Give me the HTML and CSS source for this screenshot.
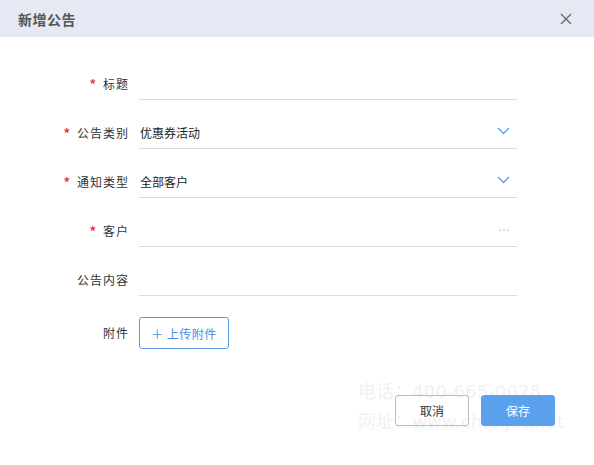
FILE: index.html
```html
<!DOCTYPE html>
<html>
<head>
  <meta charset="utf-8">
  <title>新增公告</title>
  <link rel="stylesheet" href="styles.css">
</head>
<body>
  <div class="dialog">
    <div class="dialog-header">
      <h1>新增公告</h1>
      <span class="close">
        <svg width="12" height="12" viewBox="0 0 12 12"><path d="M1 1 L11 11 M11 1 L1 11" stroke="#666" stroke-width="1.3" fill="none"/></svg>
      </span>
    </div>

    <div class="watermark">
      <p>电话：400-665-0028</p>
      <p>网址：www.chanjet.net</p>
    </div>

    <div class="form">
      <div class="form-row">
        <label><span class="req">*</span>标题</label>
        <div class="field"></div>
      </div>
      <div class="form-row">
        <label><span class="req">*</span>公告类别</label>
        <div class="field">
          <span class="value">优惠券活动</span>
          <svg class="chevron" width="13" height="8" viewBox="0 0 13 8"><path d="M1 1 L6.5 6.5 L12 1" stroke="#5b9de2" stroke-width="1.3" fill="none"/></svg>
        </div>
      </div>
      <div class="form-row">
        <label><span class="req">*</span>通知类型</label>
        <div class="field">
          <span class="value">全部客户</span>
          <svg class="chevron" width="13" height="8" viewBox="0 0 13 8"><path d="M1 1 L6.5 6.5 L12 1" stroke="#5b9de2" stroke-width="1.3" fill="none"/></svg>
        </div>
      </div>
      <div class="form-row">
        <label><span class="req">*</span>客户</label>
        <div class="field">
          <span class="value"></span>
          <svg class="more" width="12" height="4" viewBox="0 0 12 4"><circle cx="2" cy="2" r="1" fill="#c5d6ea"/><circle cx="6" cy="2" r="1" fill="#c5d6ea"/><circle cx="10" cy="2" r="1" fill="#c5d6ea"/></svg>
        </div>
      </div>
      <div class="form-row">
        <label>公告内容</label>
        <div class="field"></div>
      </div>
      <div class="form-row attach-row">
        <label>附件</label>
        <div>
          <button class="btn-upload">＋ 上传附件</button>
        </div>
      </div>
    </div>

    <div class="dialog-footer">
      <button class="btn btn-cancel">取消</button>
      <button class="btn btn-save">保存</button>
    </div>
  </div>
</body>
</html>
```

FILE: styles.css
```css
* {
  margin: 0;
  padding: 0;
  box-sizing: border-box;
}

body {
  font-family: "Noto Sans CJK SC", "Noto Sans", sans-serif;
  background: #fff;
  color: #333;
  font-size: 12px;
}

.dialog {
  position: relative;
  width: 594px;
  height: 465px;
  background: #fff;
}

.dialog-header {
  height: 37px;
  background: #e5e9f3;
  display: flex;
  align-items: center;
  justify-content: space-between;
  padding: 0 22px 0 18px;
}

.dialog-header h1 {
  font-size: 14px;
  font-weight: 700;
  color: #555;
  letter-spacing: 0.5px;
}

.close {
  display: flex;
}

.form {
  position: relative;
  padding-top: 33px;
  display: flex;
  flex-direction: column;
  gap: 19px;
}

.form-row {
  display: grid;
  grid-template-columns: 128px 378px;
  column-gap: 11px;
  align-items: center;
}

.form-row label {
  text-align: right;
  color: #333;
  letter-spacing: 1px;
  margin-right: -1px;
  margin-top: -3px;
}

.req {
  color: #e8364b;
  margin-right: 6px;
  font-size: 13px;
  font-weight: 700;
}

.field {
  height: 30px;
  border-bottom: 1px solid #dcdcdc;
  display: flex;
  align-items: center;
  justify-content: space-between;
  padding: 0 7px 3px 1px;
  color: #222;
}

.chevron {
  margin-top: -2px;
}

.more {
  margin-top: 0;
}

.attach-row {
  margin-top: 2px;
}

.attach-row label {
  margin-top: -1px;
}

.btn-upload {
  width: 90px;
  height: 32px;
  border: 1px solid #5b9de2;
  border-radius: 3px;
  background: #fff;
  color: #4a90e2;
  font-family: inherit;
  font-size: 12px;
  letter-spacing: 0.5px;
}

.dialog-footer {
  position: relative;
  display: flex;
  justify-content: flex-end;
  gap: 12px;
  padding: 46px 39px 0 0;
}

.btn {
  width: 74px;
  height: 31px;
  border-radius: 3px;
  font-family: inherit;
  font-size: 12px;
}

.btn-cancel {
  background: transparent;
  border: 1px solid #bbb;
  color: #333;
}

.btn-save {
  background: #5ba1ee;
  border: 1px solid #5ba1ee;
  color: #fff;
}

.watermark {
  position: absolute;
  left: 358px;
  top: 377px;
  font-family: "DejaVu Sans", "Noto Sans CJK SC", sans-serif;
  font-size: 18px;
  line-height: 30px;
  white-space: nowrap;
  color: #f1f1f1;
  pointer-events: none;
  letter-spacing: 0.1px;
}
```
